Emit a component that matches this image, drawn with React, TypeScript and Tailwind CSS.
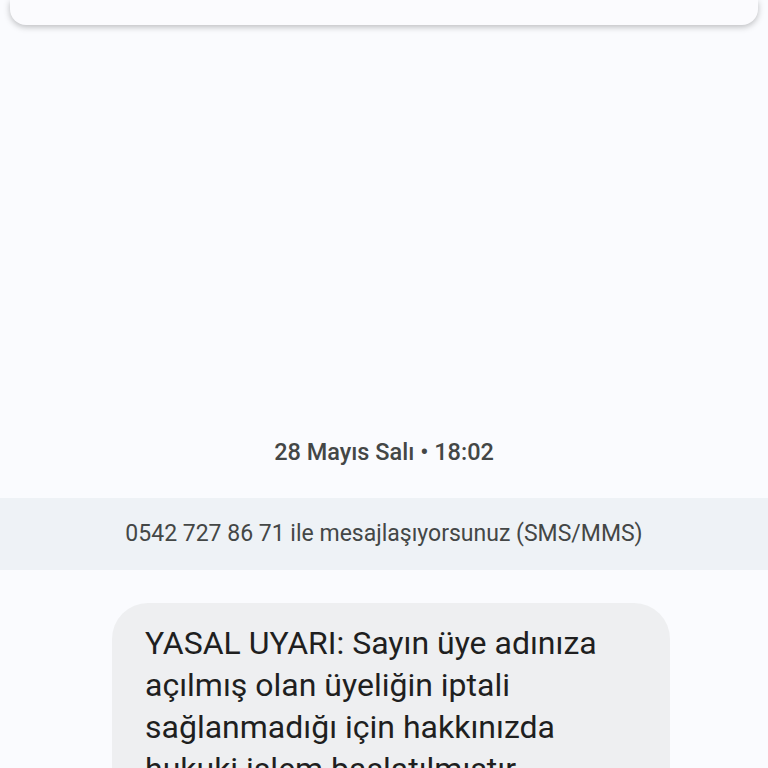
export default function App() {
  return (
    <div className="min-h-[768px] h-[768px] overflow-hidden bg-[#fafbfe]" style={{ fontFamily: 'Roboto, "Noto Sans", sans-serif' }}>
      {/* top card edge */}
      <div className="mx-[10px] h-[25px] rounded-b-[16px] bg-[#fbfbfe] shadow-[0_2px_6px_rgba(0,0,0,0.25)]" />

      <div className="h-[413px]" />

      {/* date */}
      <div className="h-[30px] flex items-center justify-center text-[23.5px] font-medium text-[#444746]">
        28 Mayıs Salı • 18:02
      </div>

      <div className="h-[30px]" />

      {/* info banner */}
      <div className="h-[72px] bg-[#eef2f6] flex items-center justify-center text-[23px] text-[#444746]">
        0542 727 86 71 ile mesajlaşıyorsunuz (SMS/MMS)
      </div>

      <div className="h-[33px]" />

      {/* message bubble */}
      <div className="ml-[112px] w-[558px] rounded-[36px] bg-[#eeeff1] pl-[33px] pr-[24px] pt-[19px] pb-[20px] text-[32px] leading-[42px] text-[#1f1f1f]">
        YASAL UYARI: Sayın üye adınıza açılmış olan üyeliğin iptali sağlanmadığı için hakkınızda hukuki işlem başlatılmıştır.
      </div>
    </div>
  );
}
